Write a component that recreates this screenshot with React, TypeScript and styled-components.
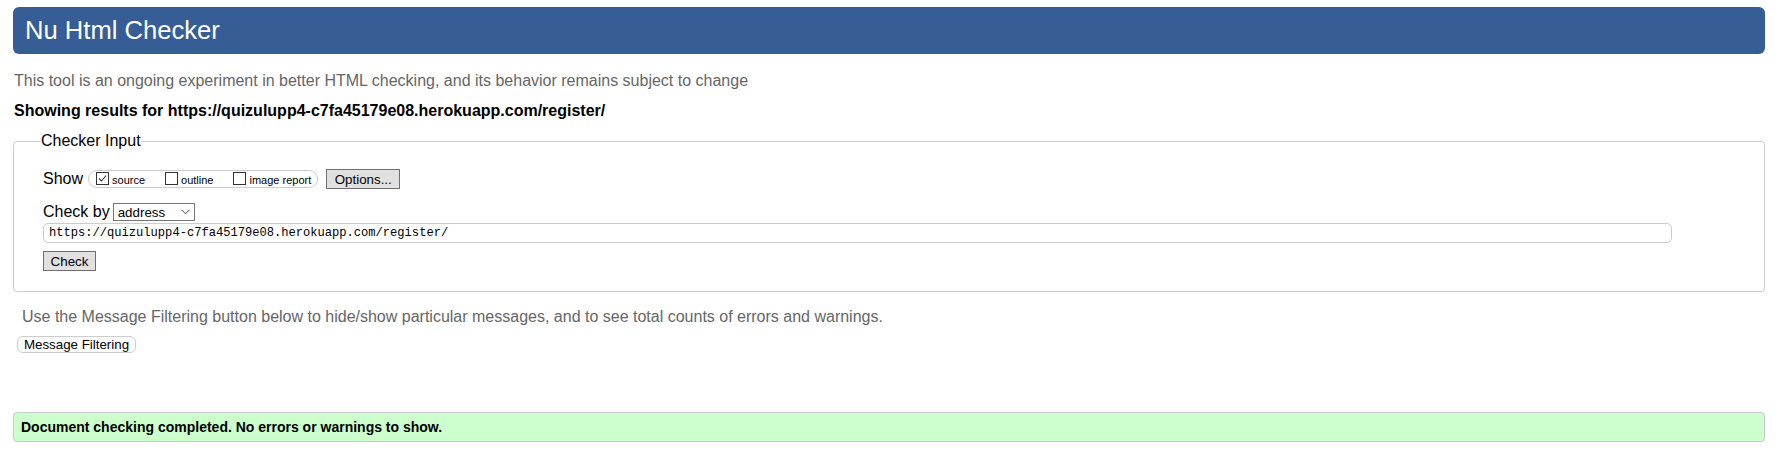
import React from 'react';
import styled, { createGlobalStyle } from 'styled-components';

const URL = 'https://quizulupp4-c7fa45179e08.herokuapp.com/register/';

const GlobalStyle = createGlobalStyle`
  body {
    margin: 0;
    background: #fff;
    font-family: "Liberation Sans", Arial, sans-serif;
    font-size: 16px;
    color: #000;
  }
`;

const Page = styled.div`
  display: flex;
  flex-direction: column;
  padding: 7px 13px 0;
`;

const Header = styled.h1`
  margin: 0;
  height: 47px;
  display: flex;
  align-items: center;
  padding-left: 12px;
  background: #365d95;
  border-radius: 6px;
  color: #fff;
  font-weight: normal;
  font-size: 25.6px;
`;

const Tagline = styled.p`
  margin: 18px 0 0 1px;
  color: #666;
  line-height: 18.4px;
`;

const ResultsFor = styled.p`
  margin: 12px 0 0 1px;
  font-weight: bold;
  line-height: 18.4px;
`;

const Fieldset = styled.fieldset`
  margin: 11px 0 0;
  padding: 0 28px 20px 29px;
  border: 1px solid #ccc;
  border-radius: 4px;
  display: flex;
  flex-direction: column;
  min-width: 0;
`;

const Legend = styled.legend`
  padding: 0;
  margin-left: -2px;
  line-height: 18.4px;
`;

const Row = styled.div<{ $top: number }>`
  display: flex;
  align-items: center;
  height: 20px;
  margin-top: ${(p) => p.$top}px;
`;

const RowLabel = styled.span<{ $gap: number }>`
  margin-right: ${(p) => p.$gap}px;
`;

const Pill = styled.div`
  display: flex;
  align-items: center;
  height: 16px;
  padding: 0 6px 0 7px;
  border: 1px solid #ccc;
  border-radius: 9px;
  gap: 20px;
`;

const CheckItem = styled.label`
  display: flex;
  align-items: center;
  gap: 3px;
  font-size: 11px;
  line-height: 12px;
  padding-top: 1px;
`;

const Box = styled.span`
  width: 11px;
  height: 11px;
  border: 1px solid #333;
  display: inline-flex;
  align-items: center;
  justify-content: center;
  margin-top: -2px;
  background: #fff;
`;

const GrayButton = styled.button<{ $w: number; $ml?: number }>`
  width: ${(p) => p.$w}px;
  height: 20px;
  margin-left: ${(p) => p.$ml ?? 0}px;
  padding: 0;
  background: #e1e1e1;
  border: 1px solid #707070;
  font-family: "Liberation Sans", Arial, sans-serif;
  font-size: 13.333px;
  color: #000;
`;

const Select = styled.div`
  height: 16px;
  width: 72px;
  border: 1px solid #767676;
  display: flex;
  align-items: center;
  justify-content: space-between;
  padding: 0 4px;
  font-size: 13.333px;
  box-sizing: content-box;
`;

const UrlInput = styled.div`
  margin-top: 1px;
  height: 20px;
  width: 1629px;
  border: 1px solid #ccc;
  border-radius: 5px;
  display: flex;
  align-items: center;
  padding-left: 5px;
  font-family: "Liberation Mono", "Courier New", monospace;
  font-size: 12.1px;
  box-sizing: border-box;
`;

const ButtonRow = styled.div`
  margin-top: 8px;
  display: flex;
`;

const Note = styled.p`
  margin: 16px 0 0 9px;
  color: #666;
  line-height: 18.4px;
`;

const FilterButton = styled.button`
  align-self: flex-start;
  margin: 9px 0 0 4px;
  height: 17px;
  width: 119px;
  padding: 0;
  border: 1px solid #ccc;
  border-radius: 6px;
  background: #fff;
  font-family: "Liberation Sans", Arial, sans-serif;
  font-size: 13.333px;
  color: #000;
`;

const Success = styled.div`
  margin-top: 59px;
  height: 30px;
  box-sizing: border-box;
  display: flex;
  align-items: center;
  padding-left: 7px;
  background: #ccffcc;
  border: 1px solid #c8c8cc;
  border-radius: 4px;
  font-weight: bold;
  font-size: 14px;
`;

const Check = () => (
  <svg width="9" height="9" viewBox="0 0 9 9">
    <path d="M1 4.5 L3.5 7 L8 1.5" fill="none" stroke="#333" strokeWidth="1.1" />
  </svg>
);

const Chevron = () => (
  <svg width="9" height="6" viewBox="0 0 9 6">
    <path d="M0.5 0.8 L4.5 4.8 L8.5 0.8" fill="none" stroke="#444" strokeWidth="1" />
  </svg>
);

export default function App() {
  const checks = [
    { label: 'source', checked: true },
    { label: 'outline', checked: false },
    { label: 'image report', checked: false },
  ];

  return (
    <>
      <GlobalStyle />
      <Page>
        <Header>Nu Html Checker</Header>
        <Tagline>
          This tool is an ongoing experiment in better HTML checking, and its behavior remains
          subject to change
        </Tagline>
        <ResultsFor>Showing results for {URL}</ResultsFor>
        <Fieldset>
          <Legend>Checker Input</Legend>
          <Row $top={19}>
            <RowLabel $gap={5}>Show</RowLabel>
            <Pill>
              {checks.map((c) => (
                <CheckItem key={c.label}>
                  <Box>{c.checked && <Check />}</Box>
                  {c.label}
                </CheckItem>
              ))}
            </Pill>
            <GrayButton $w={74} $ml={8}>
              Options...
            </GrayButton>
          </Row>
          <Row $top={13}>
            <RowLabel $gap={3}>Check by</RowLabel>
            <Select>
              address
              <Chevron />
            </Select>
          </Row>
          <UrlInput>{URL}</UrlInput>
          <ButtonRow>
            <GrayButton $w={53}>Check</GrayButton>
          </ButtonRow>
        </Fieldset>
        <Note>
          Use the Message Filtering button below to hide/show particular messages, and to see total
          counts of errors and warnings.
        </Note>
        <FilterButton>Message Filtering</FilterButton>
        <Success>Document checking completed. No errors or warnings to show.</Success>
      </Page>
    </>
  );
}
